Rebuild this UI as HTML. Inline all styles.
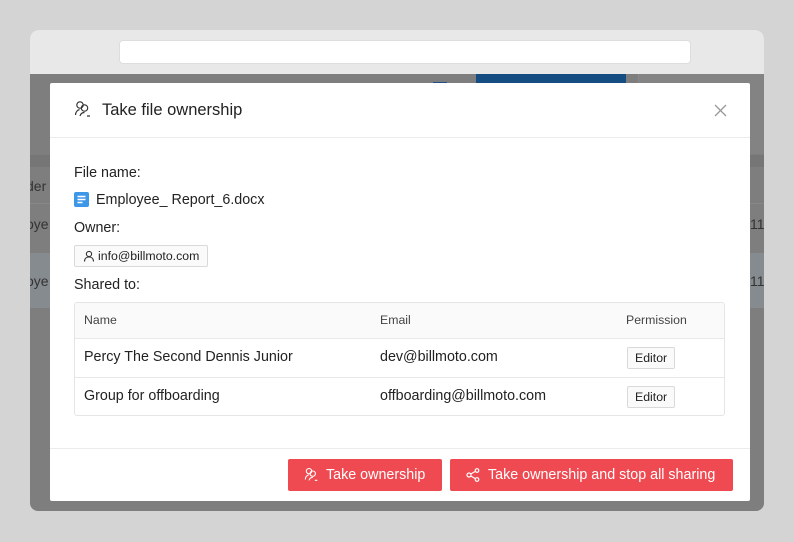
<!DOCTYPE html>
<html><head><meta charset="utf-8"><style>
*{box-sizing:border-box;margin:0;padding:0}
body{width:794px;height:542px;background:#d4d4d4;font-family:"Liberation Sans",sans-serif;position:relative;overflow:hidden;color:#222}
.win{position:absolute;left:30px;top:30px;width:734px;height:481px;border-radius:8px;overflow:hidden;background:#7e7e7e}
.bar{position:absolute;left:0;top:0;width:734px;height:44px;background:#e8e8e8}
.url{position:absolute;left:89px;top:10px;width:572px;height:24px;background:#fff;border-radius:4px;border:1px solid #ddd}
.bg{position:absolute;color:#333;font-size:14px}
.modal{position:absolute;left:50px;top:83px;width:700px;height:418px;background:#fff;border-radius:2px}
.hd{height:55px;border-bottom:1px solid #ececec;position:relative}
.hd .t{position:absolute;left:52px;top:18px;font-size:16.5px;color:#222}
.lbl{position:absolute;left:24px;font-size:14.3px;color:#222}
.tag{position:absolute;left:24px;top:162px;height:22px;border:1px solid #d9d9d9;background:#fafafa;border-radius:2px;font-size:12.3px;padding:3px 8px 0 23px}
.tbl{position:absolute;left:24px;top:219px;width:651px;height:114px;border:1px solid #e5e5e5;border-radius:3px;overflow:hidden}
.row{position:absolute;left:0;width:100%;font-size:14.3px;border-bottom:1px solid #e8e8e8}
.row span{position:absolute}
.ed{position:absolute;left:552px;border:1px solid #d9d9d9;background:#fafafa;border-radius:2px;font-size:12.3px;padding:3px 7px;height:22px}
.ft{position:absolute;left:0;top:365px;width:700px;border-top:1px solid #ececec}
.btn{position:absolute;top:376px;height:32px;background:#ef4a51;color:#fff;border-radius:2px;font-size:14.3px;padding-top:8px}
</style></head><body>
<div class="win">
<div class="bar"><div class="url"></div></div>
<div style="position:absolute;left:446px;top:44px;width:150px;height:10px;background:#154d82"></div>
<div style="position:absolute;left:608px;top:44px;width:126px;height:80px;background:#838383;border-left:1px solid #8a8a8a"></div>
<div style="position:absolute;left:403px;top:52px;width:14px;height:5px;background:#1f4f85"></div>
<div style="position:absolute;left:0;top:125px;width:734px;height:12px;background:#767676"></div>
<div style="position:absolute;left:0;top:223px;width:734px;height:55px;background:#868b90"></div>
<div style="position:absolute;left:0;top:173px;width:734px;height:1px;background:#888"></div>
<div class="bg" style="left:-4px;top:148px">der</div>
<div class="bg" style="left:-4px;top:186px">oye</div>
<div class="bg" style="left:-4px;top:243px">oye</div>
<div class="bg" style="left:720px;top:186px">11</div>
<div class="bg" style="left:720px;top:243px">11</div>
</div>
<div class="modal">
<div class="hd">
<svg style="position:absolute;left:24px;top:17px" width="18" height="18" viewBox="0 0 18 18" fill="none" stroke="#333" stroke-width="1.2"><circle cx="6" cy="5" r="3.2"/><circle cx="10.5" cy="8" r="3.2"/><path d="M1.5 15c0-3 2-5 4-5.5M6 16c.5-2 2-3.5 4.5-3.5M13 16h3"/></svg>
<div class="t">Take file ownership</div>
<svg style="position:absolute;left:664px;top:21px" width="13" height="13" viewBox="0 0 13 13" stroke="#999" stroke-width="1.3"><path d="M1 1l11 11M12 1L1 12"/></svg>
</div>
<div class="lbl" style="top:82px">File name:</div>
<svg style="position:absolute;left:24px;top:109px" width="15" height="15" viewBox="0 0 15 15"><rect width="15" height="15" rx="2" fill="#3d97e8"/><path d="M3.5 4.5h8M3.5 7.5h8M3.5 10.5h5" stroke="#fff" stroke-width="1.4"/></svg>
<div class="lbl" style="left:46px;top:109px">Employee_ Report_6.docx</div>
<div class="lbl" style="top:137px">Owner:</div>
<div class="tag"><svg style="position:absolute;left:8px;top:4px" width="12" height="12" viewBox="0 0 12 12" fill="none" stroke="#333" stroke-width="1.1"><circle cx="6" cy="4" r="2.6"/><path d="M1.5 11.5c0-3 2-4.5 4.5-4.5s4.5 1.5 4.5 4.5"/></svg>info@billmoto.com</div>
<div class="lbl" style="top:194px">Shared to:</div>
<div class="tbl">
<div class="row" style="top:0;height:36px;background:#fafafa;font-size:12.3px;color:#444"><span style="left:9px;top:10px">Name</span><span style="left:305px;top:10px">Email</span><span style="left:551px;top:10px">Permission</span></div>
<div class="row" style="top:36px;height:39px"><span style="left:9px;top:10px">Percy The Second Dennis Junior</span><span style="left:305px;top:10px">dev@billmoto.com</span><div class="ed" style="top:8px">Editor</div></div>
<div class="row" style="top:75px;height:39px;border-bottom:none"><span style="left:9px;top:10px">Group for offboarding</span><span style="left:305px;top:10px">offboarding@billmoto.com</span><div class="ed" style="top:8px">Editor</div></div>
</div>
<div class="ft"></div>
<div class="btn" style="left:238px;width:154px;padding-left:38px">
<svg style="position:absolute;left:16px;top:8px" width="15" height="15" viewBox="0 0 18 18" fill="none" stroke="#fff" stroke-width="1.3"><circle cx="6" cy="5" r="3.2"/><circle cx="10.5" cy="8" r="3.2"/><path d="M1.5 15c0-3 2-5 4-5.5M6 16c.5-2 2-3.5 4.5-3.5M13 16h3"/></svg>Take ownership</div>
<div class="btn" style="left:400px;width:283px;padding-left:38px">
<svg style="position:absolute;left:16px;top:9px" width="14" height="14" viewBox="0 0 14 14" fill="none" stroke="#fff" stroke-width="1.2"><circle cx="3" cy="7" r="2"/><circle cx="11" cy="2.5" r="1.8"/><circle cx="11" cy="11.5" r="1.8"/><path d="M4.7 6L9.4 3.4M4.7 8l4.7 2.6"/></svg>Take ownership and stop all sharing</div>
</div>
</body></html>
